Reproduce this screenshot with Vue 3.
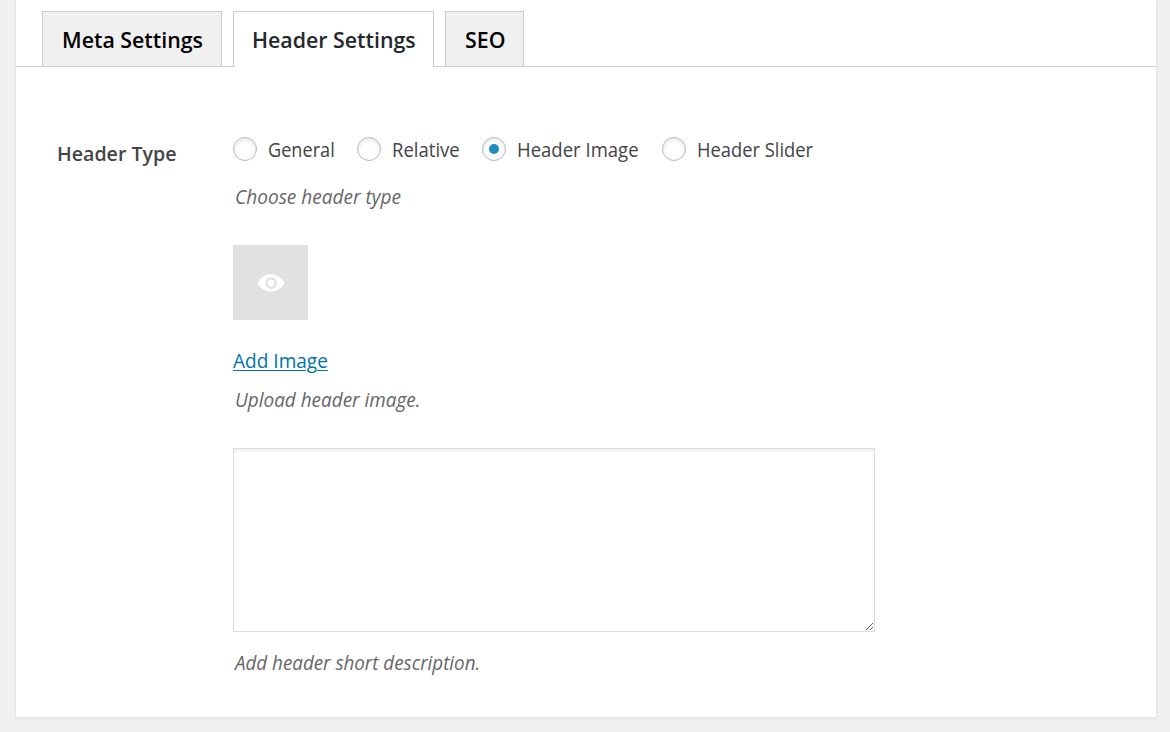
<script setup>
import { ref } from 'vue'

const tabs = [
  { id: 'meta', label: 'Meta Settings' },
  { id: 'header', label: 'Header Settings' },
  { id: 'seo', label: 'SEO' },
]
const activeTab = ref('header')

const types = [
  { id: 'general', label: 'General' },
  { id: 'relative', label: 'Relative' },
  { id: 'image', label: 'Header Image' },
  { id: 'slider', label: 'Header Slider' },
]
const headerType = ref('image')
const description = ref('')
</script>

<template>
  <div class="page">
    <section class="metabox">
      <nav class="tabs">
        <button
          v-for="tab in tabs"
          :key="tab.id"
          type="button"
          class="tab"
          :class="[`tab-${tab.id}`, { active: activeTab === tab.id }]"
          @click="activeTab = tab.id"
        ><span>{{ tab.label }}</span></button>
      </nav>

      <div class="row">
        <h3 class="row-title"><span>Header Type</span></h3>
        <div class="fields">
          <div class="radios">
            <label v-for="type in types" :key="type.id" class="radio" :class="`radio-${type.id}`">
              <input v-model="headerType" type="radio" name="header-type" :value="type.id" />
              <span>{{ type.label }}</span>
            </label>
          </div>
          <p class="hint hint-type"><span>Choose header type</span></p>

          <div class="thumb">
            <svg width="28" height="18" viewBox="0 0 28 18">
              <path d="M.5 9C3.600 3.600 8.400.3 14 .3S24.400 3.600 27.500 9C24.400 14.400 19.600 17.700 14 17.700S3.600 14.400.5 9Z" fill="#fff" />
              <rect x="9.700" y="4.400" width="8.800" height="9.400" rx="4.200" fill="none" stroke="#e1e1e1" stroke-width="2.200" />
            </svg>
          </div>

          <a class="add" href="#" @click.prevent>Add Image</a>
          <p class="hint hint-upload"><span>Upload header image.</span></p>

          <textarea v-model="description" class="description"></textarea>
          <p class="hint hint-desc"><span>Add header short description.</span></p>
        </div>
      </div>
    </section>
  </div>
</template>

<style>
body {
  background: #f0f0f0;
  overflow: hidden;
}
</style>

<style scoped>
.page {
  box-sizing: border-box;
  height: 732px;
  padding: 0 13px 14px 15px;
  font-family: "Segoe UI", "Open Sans", "Noto Sans", sans-serif;
  font-size: 19.5px;
  color: #444;
  background: #f0f0f0;
}
.metabox {
  box-sizing: border-box;
  height: 718px;
  padding-top: 11px;
  background: #fff;
  border: 1px solid #e5e5e5;
  border-top: 0;
  box-shadow: 0 1px 2px rgba(0, 0, 0, 0.06);
}
.tabs {
  display: flex;
  gap: 11px;
  height: 55px;
  padding-left: 26px;
  border-bottom: 1px solid #ccc;
}
.tab {
  display: flex;
  box-sizing: border-box;
  align-items: flex-start;
  height: 55px;
  padding: 0 0 0 19px;
  white-space: nowrap;
  font: 600 22px/54px "Segoe UI", "Open Sans", "Noto Sans", sans-serif;
  color: #000;
  background: #f0f0f0;
  border: 1px solid #ccc;
  border-bottom: 0;
}
.tab-header {
  padding-left: 18px;
}
.tab-meta {
  width: 180px;
}
.tab-header {
  width: 201px;
}
.tab-seo {
  width: 79px;
}
.tab.active {
  height: 56px;
  color: #23282d;
  background: #fff;
}

/* Slightly condensed lettering */
.tab span,
.row-title span,
.radio span,
.hint span,
.add {
  display: inline-block;
  transform: scaleX(0.97);
  transform-origin: 0 50%;
}
.row-title span {
  transform: scaleX(0.98);
}
.radio-general span {
  transform: scaleX(0.93);
}
.radio-relative span,
.radio-image span {
  transform: scaleX(0.95);
}
.radio-slider span {
  transform: scaleX(0.94);
}
.hint-desc span {
  transform: scaleX(0.963);
}
.hint-type span,
.add {
  transform: scaleX(0.977);
}

.row {
  display: flex;
  padding: 70px 0 0 41px;
}
.row-title {
  width: 176px;
  margin: 0;
  padding-top: 3px;
  font-size: 20px;
  font-weight: 600;
  line-height: 27px;
}
.fields {
  display: flex;
  flex-direction: column;
  align-items: flex-start;
}
.radios {
  display: flex;
  height: 24px;
}
.radio {
  display: flex;
  box-sizing: border-box;
  align-items: flex-start;
  gap: 11px;
  line-height: 26px;
  white-space: nowrap;
}
.radio-general {
  width: 124px;
}
.radio-relative {
  width: 125px;
}
.radio-image {
  width: 180px;
}
.radio input {
  display: flex;
  flex: none;
  box-sizing: border-box;
  align-items: center;
  justify-content: center;
  width: 24px;
  height: 24px;
  margin: 0;
  appearance: none;
  background: #fff;
  border: 1px solid #b4b9be;
  border-radius: 50%;
  box-shadow: inset 0 2px 4px rgba(0, 0, 0, 0.1);
}
.radio input:checked::before {
  content: "";
  width: 10px;
  height: 10px;
  margin: -1px 1px 0 0;
  background: #1e8cbe;
  border-radius: 50%;
}
.hint {
  margin: 0;
  padding-left: 2px;
  font-style: italic;
  line-height: 26px;
  color: #666;
}
.hint-type {
  margin-top: 23px;
}
.thumb {
  display: flex;
  align-items: center;
  justify-content: center;
  width: 75px;
  height: 75px;
  margin-top: 35px;
  background: #e1e1e1;
}
.add {
  margin-top: 28px;
  line-height: 26px;
  color: #0073aa;
  text-decoration-thickness: 1px;
  text-underline-offset: 2px;
}
.hint-upload {
  margin-top: 13px;
}
.description {
  box-sizing: border-box;
  width: 642px;
  height: 184px;
  margin: 35px 0 0;
  padding: 4px 9px;
  font: inherit;
  color: #32373c;
  background: #fff;
  border: 1px solid #ddd;
  outline: 0;
  box-shadow: inset 0 2px 3px rgba(0, 0, 0, 0.07);
}
.hint-desc {
  margin-top: 18px;
}
</style>
